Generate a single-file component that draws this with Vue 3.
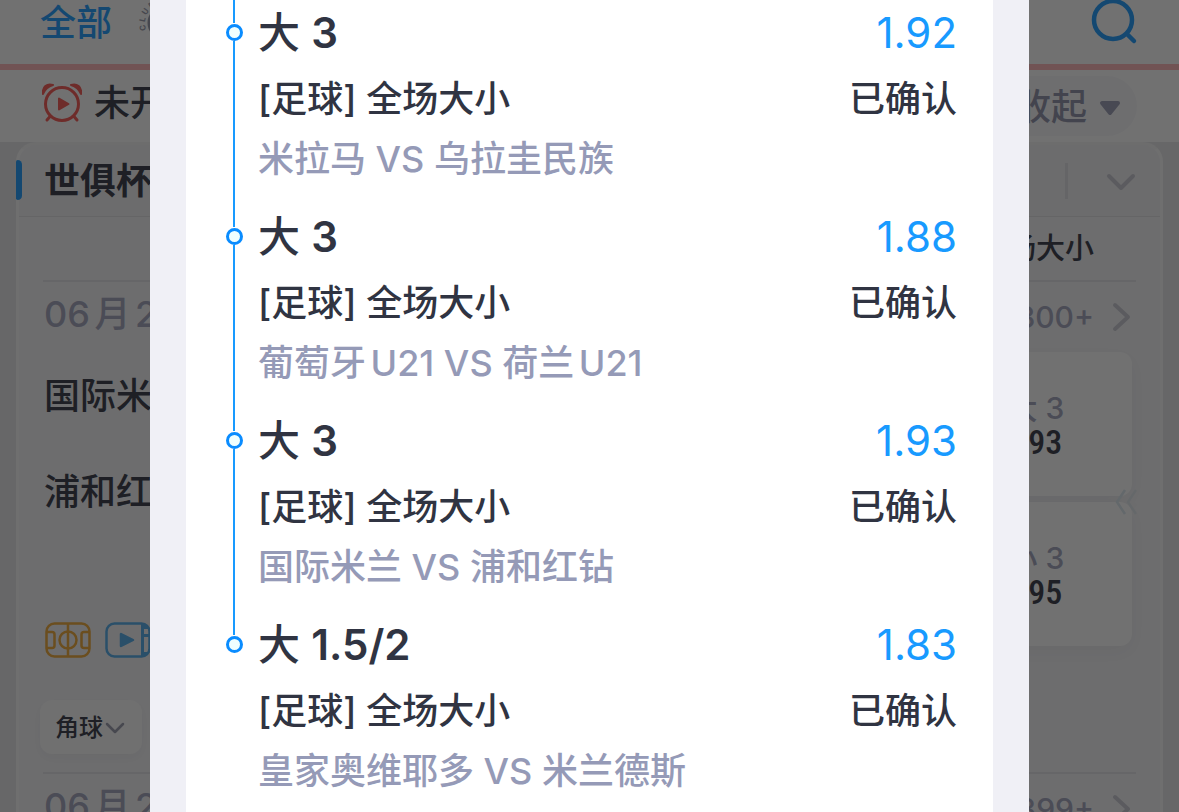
<script setup>
const bets = [
  { side: '大', line: '3', odds: '1.92', market: '[足球] 全场大小', state: '已确认', match: '米拉马 VS 乌拉圭民族' },
  { side: '大', line: '3', odds: '1.88', market: '[足球] 全场大小', state: '已确认', match: '葡萄牙U21 VS 荷兰U21' },
  { side: '大', line: '3', odds: '1.93', market: '[足球] 全场大小', state: '已确认', match: '国际米兰 VS 浦和红钻' },
  { side: '大', line: '1.5/2', odds: '1.83', market: '[足球] 全场大小', state: '已确认', match: '皇家奥维耶多 VS 米兰德斯' }
]
const quotes = [
  { label: '大 3', price: '1.93' },
  { label: '小 3', price: '1.95' }
]
</script>

<template>
  <div class="screen">
    <div class="page">
      <nav class="nav">
        <button class="tab">全部</button>
        <button class="club" aria-label="Club World Cup">
          <svg width="56" height="56" viewBox="0 0 56 56">
            <defs><path id="ring" d="M10.300 35A19 19 0 1 1 45.700 35" /></defs>
            <circle cx="28" cy="28" r="14" fill="none" stroke="#9597a8" stroke-width="5" />
            <text class="ring-text"><textPath href="#ring">CLUB WORLD</textPath></text>
          </svg>
        </button>
        <button class="search" aria-label="搜索">
          <svg width="48" height="48" viewBox="0 0 48 48" fill="none" stroke="#189aff" stroke-width="4.500" stroke-linecap="round">
            <circle cx="22" cy="21" r="19" /><path d="M36 35L43 42" />
          </svg>
        </button>
      </nav>

      <div class="status">
        <svg width="40" height="40" viewBox="0 0 40 40">
          <g fill="none" stroke="#f7544f" stroke-width="3" stroke-linecap="round">
            <circle cx="20" cy="21" r="16.500" />
            <path d="M8 33.500L5 37M32 33.500L35 37" />
          </g>
          <path d="M1 11C0 4 5 0 11 2C7 3 3 6 1 11ZM39 11C40 4 35 0 29 2C33 3 37 6 39 11Z" fill="#f7544f" stroke="#f7544f" stroke-width="2" stroke-linejoin="round" />
          <path d="M17 15.500V26.500L26.500 21Z" fill="#f7544f" stroke="#f7544f" stroke-width="2" stroke-linejoin="round" />
        </svg>
        <span class="status-name">未开赛</span>
        <button class="fold">收起
          <svg width="22" height="16" viewBox="0 0 22 16"><path d="M3 3H19L11 13Z" fill="#9a9cb4" stroke="#9a9cb4" stroke-width="4" stroke-linejoin="round" /></svg>
        </button>
      </div>

      <main class="body">
        <section class="league">
          <header class="league-head">
            <h2>世俱杯</h2>
            <button class="toggle" aria-label="展开">
              <svg width="30" height="18" viewBox="0 0 30 18"><path d="M3 3L15 15L27 3" /></svg>
            </button>
          </header>
          <div class="columns">全场大小</div>
          <div class="meta">
            <time>06月22日</time>
            <a href="#" class="more">300+ <svg width="20" height="30" viewBox="0 0 20 30"><path d="M3 3L16 15L3 27" /></svg></a>
          </div>
          <div class="game">
            <div class="teams">
              <p>国际米兰</p>
              <p>浦和红钻</p>
              <div class="icons">
                <svg width="46" height="36" viewBox="0 0 46 36" fill="none" stroke="#efa732" stroke-width="2.500">
                  <rect x="1.500" y="1.500" width="43" height="33" rx="8" />
                  <circle cx="23" cy="18" r="8.500" />
                  <path d="M23 1.500V34.500M2 10H7Q9.500 10 9.500 12.500V23.500Q9.500 26 7 26H2M44 10H39Q36.500 10 36.500 12.500V23.500Q36.500 26 39 26H44" />
                </svg>
                <svg width="46" height="36" viewBox="0 0 46 36" fill="none" stroke="#4eaaeb" stroke-width="2.500">
                  <rect x="1.500" y="1.500" width="43" height="33" rx="8" />
                  <path d="M37.500 2V34" stroke-width="3" />
                  <path d="M38 2.500H41L44 7H38ZM38 12H44V15H38ZM38 30H44L41 34H38Z" fill="#4eaaeb" stroke="none" />
                  <path d="M16 12V24L28 18Z" fill="#4eaaeb" stroke-linejoin="round" />
                </svg>
              </div>
              <button class="chip">角球<svg width="20" height="14" viewBox="0 0 20 14"><path d="M2 4L10 12L18 4" fill="none" stroke="#9698aa" stroke-width="2.500" stroke-linecap="round" stroke-linejoin="round" /></svg></button>
            </div>
            <div class="quotes">
              <button v-for="q in quotes" :key="q.label" class="quote">
                <span>{{ q.label }}</span><b>{{ q.price }}</b>
              </button>
              <svg class="swipe" width="22" height="26" viewBox="0 0 22 26" fill="none" stroke-width="2.500"><path d="M10 1L2 13L10 25" stroke="#dbe9f1" /><path d="M21 1L13 13L21 25" stroke="#e1e9ee" /></svg>
            </div>
          </div>
          <div class="meta">
            <time>06月22日</time>
            <a href="#" class="more">399+ <svg width="20" height="30" viewBox="0 0 20 30"><path d="M3 3L16 15L3 27" /></svg></a>
          </div>
        </section>
      </main>
    </div>

    <div class="mask">
      <div class="dialog" role="dialog" aria-label="投注详情">
        <ol class="slip">
          <li v-for="bet in bets" :key="bet.match" class="bet">
            <div class="rail"><i class="line lead"></i><i class="dot"></i><i class="line tail"></i></div>
            <div class="info">
              <div class="row pick"><span>{{ bet.side }} <strong>{{ bet.line }}</strong></span><span class="odds">{{ bet.odds }}</span></div>
              <div class="row market"><span>{{ bet.market }}</span><span class="state">{{ bet.state }}</span></div>
              <div class="match">{{ bet.match }}</div>
            </div>
          </li>
        </ol>
      </div>
    </div>
  </div>
</template>

<style>
body { overflow: hidden; }
</style>

<style scoped>
.screen {
  position: relative;
  height: 100vh;
  overflow: hidden;
  font-family: Inter, "Noto Sans CJK SC", sans-serif;
  font-weight: 500;
  color: #303442;
  text-autospace: normal;
}
button { border: 0; padding: 0; background: none; font: inherit; color: inherit; }
svg { display: block; flex: none; }
h2, p, ol { margin: 0; padding: 0; }
.page { height: 100%; background: #e7e7e9; }
.nav {
  box-sizing: border-box;
  height: 70px;
  padding: 0 40px 18px;
  border-bottom: 6px solid #ffb3b7;
  background: #fff;
  display: flex;
  align-items: center;
  gap: 24px;
}
.tab { font-size: 36px; line-height: 46px; color: #189aff; }
.ring-text { font-size: 8px; font-weight: 700; letter-spacing: 2px; fill: #9597a8; }
.search { margin-left: auto; }
.status {
  box-sizing: border-box;
  height: 72px;
  padding: 0 42px 6px;
  background: #fff;
  display: flex;
  align-items: center;
  gap: 12px;
  font-size: 36px;
}
.status-name { line-height: 40px; }
.fold {
  box-sizing: border-box;
  align-self: flex-end;
  margin-left: auto;
  height: 60px;
  padding: 0 16px 4px 32px;
  border-radius: 30px;
  background: #f8f8fb;
  color: #8d90a8;
  display: flex;
  align-items: center;
  gap: 12px;
}
.fold svg { margin-top: 8px; }
.body { padding: 0 16px; }
.league {
  border: 3px solid #fafafb;
  border-top-color: #f4f4f6;
  border-radius: 20px 20px 0 0;
  background: #f5f5f8;
  padding: 0 24px;
}
.league-head {
  position: relative;
  height: 71px;
  margin: 0 -24px;
  padding: 0 24px 0 25px;
  border-bottom: 1px solid #e0e0e4;
  border-radius: 18px 18px 0 0;
  background: #f2f2f6;
  display: flex;
  align-items: center;
  justify-content: space-between;
}
.league-head::before {
  content: "";
  position: absolute;
  left: -3px;
  top: 15px;
  width: 6px;
  height: 40px;
  border-radius: 2px 5px 5px 2px;
  background: #189aff;
}
h2 { font-size: 36px; line-height: 48px; font-weight: 700; }
.toggle {
  height: 36px;
  padding: 2px 0 0 38px;
  border-left: 3px solid #e2e2e7;
  display: flex;
  align-items: center;
}
.toggle path, .more path {
  fill: none;
  stroke: #c8c9d2;
  stroke-width: 4;
  stroke-linecap: round;
  stroke-linejoin: round;
}
.columns {
  height: 63px;
  line-height: 63px;
  padding-right: 42px;
  border-bottom: 2px solid #e4e4e8;
  font-size: 29px;
  text-align: right;
}
.meta {
  height: 70px;
  padding-left: 1px;
  display: flex;
  align-items: center;
  justify-content: space-between;
  font-size: 36px;
  color: #a0a3bb;
}
.meta time { padding-bottom: 12px; }
.more {
  display: flex;
  align-items: center;
  gap: 18px;
  padding-right: 4px;
  font-size: 30px;
  color: inherit;
  text-decoration: none;
}
.game {
  display: flex;
  justify-content: space-between;
  height: 420px;
  border-bottom: 2px solid #e4e4e8;
}
.teams { padding-left: 1px; }
.teams p { height: 96px; line-height: 88px; font-size: 36px; }
.icons { display: flex; gap: 14px; margin-top: 78px; padding-left: 1px; }
.chip {
  margin: 42px 0 0 -4px;
  height: 54px;
  padding: 0 17px 4px 15px;
  border-radius: 12px;
  background: #fcfcfd;
  box-shadow: 0 4px 12px #0000000a;
  font-size: 24px;
  display: flex;
  align-items: center;
  gap: 2px;
}
.chip svg { margin-top: 4px; }
.quotes {
  position: relative;
  width: 192px;
  margin-right: 4px;
  display: flex;
  flex-direction: column;
  gap: 6px;
}
.quote {
  height: 144px;
  border-radius: 12px;
  background: #fff;
  box-shadow: 0 6px 20px #0000000c;
  display: flex;
  flex-direction: column;
  align-items: center;
  justify-content: center;
}
.quote span { font-size: 30px; line-height: 34px; margin-top: 2px; color: #a0a3bb; }
.quote b {
  padding-right: 8px;
  font-family: "Liberation Sans Narrow", "Roboto Condensed", Roboto, sans-serif;
  font-size: 34px;
  line-height: 34px;
  font-weight: 500;
}
.swipe { position: absolute; right: -5px; top: 137px; }

.mask {
  position: absolute;
  inset: 0;
  padding: 0 150px;
  background: rgba(18, 18, 18, 0.6);
}
.dialog {
  box-sizing: border-box;
  height: 100%;
  padding: 0 36px;
  background: #f0f0f6;
}
.slip {
  box-sizing: border-box;
  height: 100%;
  padding: 0 36px 0 40px;
  background: #fff;
  list-style: none;
}
.bet { display: flex; gap: 15px; }
.rail { display: flex; flex-direction: column; width: 17px; }
.line { width: 2px; margin-left: 7px; background: #189aff; }
.lead { height: 23px; }
.dot {
  box-sizing: border-box;
  width: 17px;
  height: 17px;
  margin-top: 1px;
  border: 3px solid #0a8cff;
  border-radius: 50%;
  background: #f0ffff;
}
.tail { flex: 1; }
.bet:last-child .tail { visibility: hidden; }
.info { flex: 1; padding-bottom: 18px; font-size: 36px; }
.row { display: flex; justify-content: space-between; }
.pick { font-size: 42px; line-height: 66px; }
.pick strong { font-weight: 600; }
.odds { font-weight: 400; color: #189aff; }
.market { line-height: 66px; }
.match { line-height: 54px; color: #959ab7; }
</style>
